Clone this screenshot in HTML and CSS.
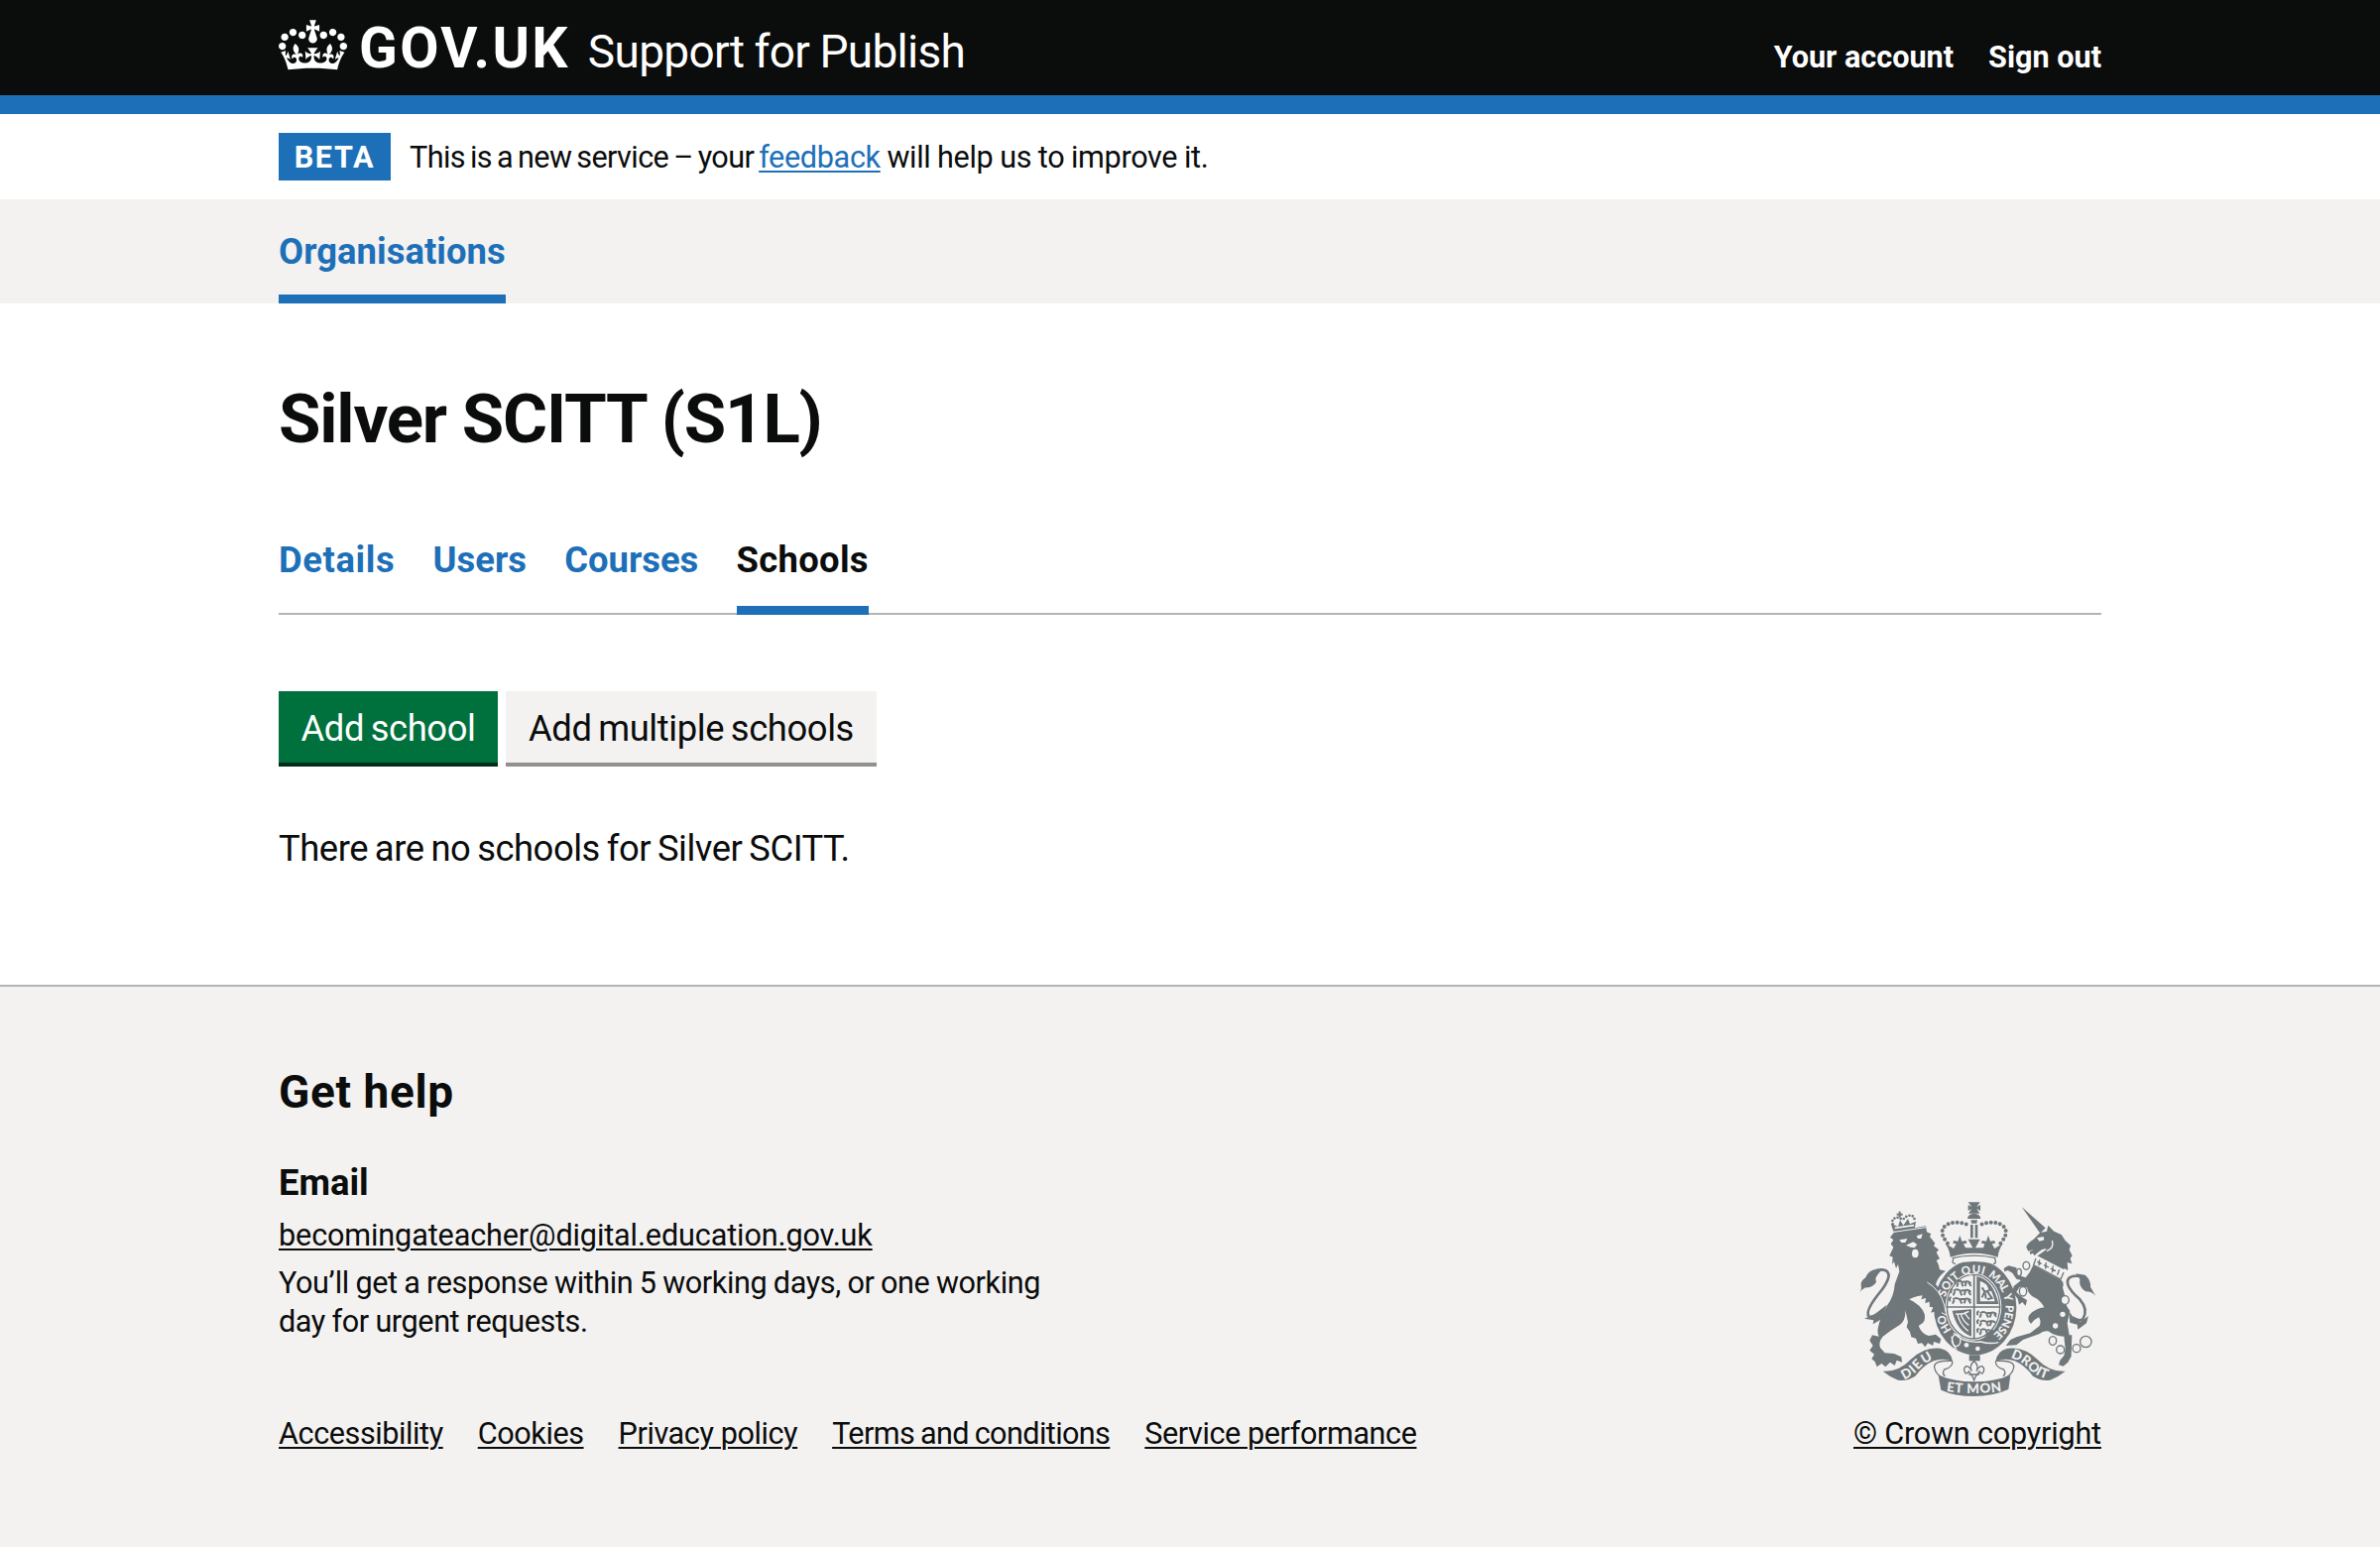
FILE: index.html
```html
<!DOCTYPE html>
<html lang="en">
<head>
<meta charset="utf-8">
<title>Silver SCITT (S1L) - Support for Publish - GOV.UK</title>
<link rel="stylesheet" href="styles.css">
</head>
<body>
<header class="header">
  <div class="container header-row">
    <svg class="header-crown" viewBox="0 0 132 97" aria-hidden="true"><path fill="currentColor" fill-rule="evenodd" d="M25 30.2c3.5 1.5 7.7-.2 9.1-3.7 1.5-3.6-.2-7.8-3.9-9.2-3.6-1.4-7.6.3-9.1 3.9-1.4 3.5.3 7.5 3.9 9zM9 39.5c3.6 1.5 7.8-.2 9.2-3.7 1.5-3.6-.2-7.8-3.9-9.1-3.6-1.5-7.6.2-9.1 3.8-1.4 3.5.3 7.5 3.8 9zM4.4 57.2c3.5 1.5 7.7-.2 9.1-3.8 1.5-3.6-.2-7.7-3.9-9.1-3.5-1.5-7.6.3-9.1 3.8-1.4 3.5.3 7.6 3.9 9.1zm38.3-21.4c3.5 1.5 7.7-.2 9.1-3.8 1.5-3.6-.2-7.7-3.9-9.1-3.6-1.5-7.6.3-9.1 3.8-1.3 3.6.4 7.7 3.9 9.1zm64.4-5.6c-3.6 1.5-7.8-.2-9.1-3.7-1.5-3.6.2-7.8 3.8-9.2 3.6-1.4 7.7.3 9.2 3.9 1.3 3.5-.4 7.5-3.9 9zm15.9 9.3c-3.6 1.5-7.7-.2-9.1-3.7-1.5-3.6.2-7.8 3.7-9.1 3.6-1.5 7.7.2 9.2 3.8 1.5 3.5-.3 7.5-3.8 9zm4.7 17.7c-3.6 1.5-7.8-.2-9.2-3.8-1.5-3.6.2-7.7 3.9-9.1 3.6-1.5 7.7.3 9.2 3.8 1.3 3.5-.4 7.6-3.9 9.1zM89.3 35.8c-3.6 1.5-7.8-.2-9.2-3.8-1.4-3.6.2-7.7 3.9-9.1 3.6-1.5 7.7.3 9.2 3.8 1.4 3.6-.3 7.7-3.9 9.1zM69.7 17.7l8.9 4.7V9.3l-8.9 2.8c-.2-.3-.5-.6-.9-.9L72.4 0H59.6l3.5 11.2c-.3.3-.6.5-.9.9l-8.8-2.8v13.1l8.8-4.7c.3.3.6.7.9.9l-5 15.4v.1c-.2.8-.4 1.6-.4 2.4 0 4.1 3.1 7.5 7 8.1h.2c.3 0 .7.1 1 .1.4 0 .7 0 1-.1h.2c4-.6 7.1-4.1 7.1-8.1 0-.8-.1-1.7-.4-2.4V34l-5.1-15.4c.4-.2.7-.6 1-.9zM66 92.8c16.9 0 32.8 1.1 47.1 3.2 4-16.9 8.9-26.7 14-33.5l-9.6-3.4c1 4.9 1.1 7.2 0 10.2-1.5-1.4-3-4.3-4.2-8.7L108.6 76c2.8-2 5-3.2 7.5-3.3-4.4 9.4-10 11.9-13.6 11.2-4.3-.8-6.3-4.6-5.6-7.9 1-4.7 5.7-5.9 8-.5 4.3-8.7-3-11.4-7.6-8.8 7.1-7.2 7.9-13.5 2.1-21.1-8 6.1-8.1 12.3-4.5 20.8-4.7-5.4-12.1-2.5-9.5 6.2 3.4-5.2 7.9-2 7.2 3.1-.6 4.3-6.4 7.8-13.5 7.2-10.3-.9-10.9-8-11.2-13.8 2.5-.5 7.1 1.8 11 7.3L80.2 60c-4.1 4.4-8 5.3-12.3 5.4 1.4-4.4 8-11.6 8-11.6H55.5s6.4 7.2 7.9 11.6c-4.2-.1-8-1-12.3-5.4l1.4 16.4c3.9-5.5 8.5-7.7 10.9-7.3-.3 5.8-.9 12.8-11.1 13.8-7.2.6-12.9-2.9-13.5-7.2-.7-5 3.8-8.3 7.1-3.1 2.7-8.7-4.6-11.6-9.4-6.2 3.7-8.5 3.6-14.7-4.6-20.8-5.8 7.6-5 13.9 2.2 21.1-4.7-2.6-11.9.1-7.7 8.8 2.3-5.5 7.1-4.2 8.1.5.7 3.3-1.3 7.1-5.7 7.9-3.5.7-9-1.8-13.5-11.2 2.5.1 4.7 1.3 7.5 3.3l-4.7-15.4c-1.2 4.4-2.7 7.2-4.3 8.7-1.1-3-.9-5.3 0-10.2l-9.5 3.4c5 6.9 9.9 16.7 14 33.5 14.8-2.1 30.8-3.2 47.7-3.2z"/></svg>
    <span class="header-logotype">GOV.UK</span>
    <span class="header-service">Support for Publish</span>
    <nav class="header-nav">
      <a class="header-link">Your account</a>
      <a class="header-link">Sign out</a>
    </nav>
  </div>
</header>
<div class="header-bar"></div>

<div class="container phase-banner">
  <strong class="phase-tag">BETA</strong>
  <span class="phase-text"><span class="phase-lead">This is a new service – your </span><a class="phase-link">feedback</a> will help us to improve it.</span>
</div>

<nav class="primary-nav">
  <div class="container"><a class="primary-link">Organisations</a></div>
</nav>

<main class="container main">
  <h1 class="title">Silver SCITT (S1L)</h1>
  <nav class="tabs">
    <a class="tab tab-details">Details</a>
    <a class="tab">Users</a>
    <a class="tab">Courses</a>
    <a class="tab tab-current">Schools</a>
  </nav>
  <div class="buttons">
    <button class="button button-primary">Add school</button>
    <button class="button button-secondary">Add multiple schools</button>
  </div>
  <p class="body-text">There are no schools for Silver SCITT.</p>
</main>

<footer class="footer">
  <div class="container footer-row">
    <div class="footer-main">
      <h2 class="footer-title">Get help</h2>
      <h3 class="footer-subtitle">Email</h3>
      <p class="footer-text"><a class="footer-link footer-email">becomingateacher@digital.education.gov.uk</a></p>
      <p class="footer-text">You’ll get a response within 5 working days, or one working<br>day for urgent requests.</p>
      <div class="footer-links">
        <a class="footer-link">Accessibility</a>
        <a class="footer-link">Cookies</a>
        <a class="footer-link">Privacy policy</a>
        <a class="footer-link link-terms">Terms and conditions</a>
        <a class="footer-link">Service performance</a>
      </div>
    </div>
    <div class="footer-meta">
      <svg class="crest" viewBox="27 33 750 588" aria-hidden="true">
        <defs>
          <path id="garter" pathLength="360" d="M394 455A93 103 0 0 1 301 352A93 103 0 0 1 394 249A93 103 0 0 1 487 352A93 103 0 0 1 394 455"/>
          <path id="ribbon-left" d="M180 571Q206 560 226 538Q246 516 280 504"/>
          <path id="ribbon-mid" d="M308 606Q392 618 480 605"/>
          <path id="ribbon-right" d="M502 504Q538 516 560 540Q582 562 618 570"/>
        </defs>
        <!-- lion -->
        <g class="ink">
          <path d="M138 140L152 122L246 106L249 124L262 130L258 138L274 158L270 166L285 178L278 186L288 205L278 210Q286 222 288 238L306 242Q284 256 276 282L290 300Q300 320 300 345L303 370L290 364L284 378L277 364L262 368L268 352L256 350L268 338L260 334L244 340L246 324L232 328L236 316L222 318Q205 322 196 328Q232 345 242 372Q246 392 236 400L224 408Q234 434 256 438L276 434L292 448L288 462L270 456L268 468L252 460L244 472L234 460L222 462L216 446L202 442L198 426L188 412L192 396L184 360Q186 392 166 406Q140 422 116 440Q102 456 108 474L122 490L150 492L172 502L174 518L158 512L152 528L138 518L124 532L112 522L98 532L92 516L82 508L90 494L76 482L86 468L76 452L84 436L104 440Q98 428 102 412Q106 388 128 348Q150 318 152 282L166 244L162 222L156 234L150 214L144 222L146 200L136 196L148 170L140 160L148 148Z"/>
          <path d="M42 312Q54 298 50 286Q48 272 64 262Q72 238 100 236L112 240Q88 262 96 276Q84 294 64 292Q50 298 42 312Z"/>
          <path d="M60 374Q76 384 100 366L128 344L112 388L86 403L88 391L60 386L72 381Z"/>
          <path d="M148 122L140 98L162 108L168 88L178 104L192 84L198 100L216 92L212 116Z"/>
          <rect x="164" y="62" width="6" height="18"/><rect x="158" y="68" width="18" height="6"/>
        </g>
        <path class="line w8" d="M96 240Q132 232 134 256Q132 278 98 318Q62 366 74 378"/>
        <path class="dots w8" d="M146 100Q140 80 166 80Q176 92 188 76Q214 68 212 94"/>
        <g class="paper">
          <path d="M166 148L190 144L184 156L172 156ZM218 136L236 130L232 144L222 144Z"/>
          <path d="M186 164L208 154L220 162L212 172L200 170Z"/>
          <ellipse cx="214" cy="189" rx="10" ry="13"/>
        </g>
        <path class="gap w3" d="M150 124L246 110"/>
        <path class="gap w5" d="M152 112L210 104"/>

        <!-- garter and shield -->
        <ellipse class="ink" cx="395" cy="352" rx="125" ry="144"/>
        <ellipse class="paper" cx="390" cy="350" rx="85" ry="102"/>
        <ellipse class="line w4" cx="390" cy="350" rx="80" ry="97"/>
        <path class="ink" d="M400 258Q450 268 466 342H400Z"/>
        <path class="paper" d="M410 272Q444 284 455 334H410Z"/>
        <path class="ink" d="M326 362L384 358V440Q340 424 326 362Z"/>
        <path class="gap w4" d="M342 372Q346 400 374 424M352 370Q356 392 376 406M362 368L378 388M336 372Q360 374 376 364"/>
        <path class="line w5" d="M392 252V448M308 351H472"/>
        <g class="line w7">
          <path d="M336 282q-6-10 3-12M340 276q8-8 16 0l12-2q10-2 14 6M344 278l-4 12M354 278l5 11M368 276l-3 12M376 278l7 10M338 272l6-4"/>
          <path d="M324 308q-6-10 3-12M330 302q10-8 20 0l16-2q12-2 16 6M334 304l-5 12M350 304l5 12M366 302l-4 13M375 304l7 11"/>
          <path d="M320 334q-6-10 3-12M328 328q10-8 20 0l18-2q12-2 16 6M332 330l-5 11M350 330l5 11M366 328l-4 12M375 330l7 10"/>
          <path d="M404 376q-6-10 3-12M410 370q10-8 20 0l14-2q12-2 16 6M414 372l-5 11M430 372l5 11M444 370l-4 12M453 372l6 9"/>
          <path d="M404 402q-6-10 3-12M410 396q10-8 20 0l12-2q12-2 14 6M414 398l-5 11M430 398l5 11M444 396l-4 12"/>
          <path d="M404 428q-6-10 3-12M410 422q10-8 20 0l10-2M414 424l-5 11M428 424l5 9"/>
        </g>
        <path class="line w7" d="M416 322L424 304L416 292M424 306L440 300L434 284M432 304L446 324L432 328M426 310L428 326"/>
        <path class="gap w4" d="M330 430Q362 462 414 456M324 440Q330 476 340 478"/>
        <path class="ink" d="M412 456L446 418L474 440L448 474Z"/>
        <path class="gap w4" d="M412 456Q440 464 466 458"/>
        <g class="paper"><circle cx="369" cy="466" r="7"/><circle cx="403" cy="477" r="7"/></g>
        <ellipse class="gap w4" cx="338" cy="452" rx="13" ry="18"/>
        <g class="motto">
          <text><textPath href="#garter" startOffset="47" textLength="52">HO</textPath></text>
          <text><textPath href="#garter" startOffset="108" textLength="76">SOIT</textPath></text>
          <text><textPath href="#garter" startOffset="158" textLength="66">QUI</textPath></text>
          <text><textPath href="#garter" startOffset="204" textLength="68">MAL</textPath></text>
          <text><textPath href="#garter" startOffset="247">Y</textPath></text>
          <text><textPath href="#garter" startOffset="266" textLength="100">PENSE</textPath></text>
        </g>
        <path class="ink" d="M250 276Q290 300 302 345L308 372L292 366L284 380L276 364L262 366L270 350L258 348Z"/>
        <path class="gap w3" d="M250 276Q290 300 302 345L308 376L294 368"/>

        <!-- crown -->
        <path class="paper" d="M322 196Q392 184 464 196L456 222Q392 204 330 222Z"/>
        <g class="ink">
          <path d="M374 34H410L400 48L411 42V60L400 54L409 68H375L384 54L374 60V42L385 48Z"/>
          <path d="M372 84A20 16 0 0 1 412 84Z"/>
          <path d="M304 158L330 174L338 160L328 158L330 150L343 152L349 134L355 152L368 150L370 158L360 160L366 172H388L374 146H410L396 172H420L424 160L414 158L416 150L429 152L435 134L441 152L454 150L456 158L446 160L454 174L480 158Q466 176 464 200Q392 176 320 200Q318 176 304 158Z"/>
          <path d="M382 88H402L400 98H384ZM381 102H389V142H381ZM395 102H403V142H395Z"/>
        </g>
        <path class="line w4" d="M330 204Q322 220 336 220M454 204Q462 220 450 220M326 203Q392 188 458 203"/>
        <path class="dots w11" d="M312 158Q284 126 304 106Q330 86 372 102M472 158Q500 126 480 106Q454 86 412 102"/>

        <!-- unicorn -->
        <g class="ink">
          <path d="M536 48L608 112L592 128Z"/>
          <path d="M616 104L634 122L656 132L668 150L684 165L680 178L689 196L683 204L688 220L674 216L676 240L664 234L662 246L578 200L612 176Q602 172 588 184L574 196L570 188L562 192L560 184L574 176L556 182L550 170Q552 158 572 146L592 126L612 122Z"/>
          <path d="M572 222L654 268Q666 278 660 292L668 322Q666 344 682 362L674 400L680 436L688 436L686 500L676 518L662 530L648 526L652 512L664 498L668 478L664 440Q638 440 616 424Q600 422 590 432L540 450L520 466L488 468L502 450L520 442L562 430L590 408Q596 395 588 382Q574 388 564 402Q550 388 560 374Q580 354 604 352Q594 332 574 322Q556 314 552 292L530 290L520 306L538 322L552 330L548 348L538 336L528 344L524 326L508 306L512 288L534 270L520 266L508 248L494 240L484 244L482 234L496 226L520 232L524 254L548 262L560 246Z"/>
          <path d="M700 250L728 254Q746 270 744 290L760 318Q750 304 730 304Q708 292 712 266Z"/>
          <path d="M678 362L696 388L714 396L738 378L732 400L706 419L704 404L682 398Z"/>
        </g>
        <path class="line w8" d="M716 258Q668 252 676 284Q682 302 712 328Q738 358 722 386Q712 398 690 382"/>
        <path class="paper" d="M580 194L668 240L656 270L570 224Z"/>
        <path class="line w4" d="M579 204L572 224L654 267L663 246M588 226L590 208M583 214L596 220M608 236L610 216M603 224L618 231M628 247L631 226M623 234L639 242M644 254L650 238"/>
        <path class="gap w4" d="M628 150Q636 172 612 182"/>
        <path class="paper" d="M582 142L602 138L604 148L590 152Z"/>
        <g class="ring">
          <ellipse cx="550" cy="226" rx="10" ry="12"/><ellipse cx="528" cy="246" rx="7" ry="11"/><ellipse cx="540" cy="304" rx="11" ry="14"/>
          <ellipse cx="667" cy="330" rx="12" ry="13"/><ellipse cx="630" cy="453" rx="11" ry="13"/>
          <circle cx="653" cy="480" r="12"/><circle cx="702" cy="476" r="12"/><circle cx="730" cy="456" r="17"/>
        </g>
        <g class="paper"><circle cx="660" cy="373" r="8"/><circle cx="638" cy="408" r="8"/></g>

        <!-- ribbon -->
        <g class="ink">
          <path d="M116 545Q164 548 200 510Q240 470 290 476Q324 484 327 516Q300 504 270 514Q240 526 214 560Q190 576 162 572Q136 562 116 545Z"/>
          <path d="M668 545Q620 548 584 510Q544 470 494 476Q460 484 457 516Q484 504 514 514Q544 526 570 560Q594 576 622 572Q648 562 668 545Z"/>
          <path d="M284 558Q340 578 392 577Q446 578 502 558L496 600Q450 621 392 621Q332 621 292 602Z"/>
          <path d="M377 496H410V514H377Z"/>
        </g>
        <path class="line w4" d="M327 514Q268 512 272 534Q276 556 300 566M327 516Q326 534 302 540Q294 552 304 560M457 514Q516 512 512 534Q508 556 484 566M457 516Q458 534 482 540Q490 552 480 560"/>
        <path class="fleur" d="M392 514Q376 530 385 545Q378 530 368 530Q356 538 367 552Q374 552 376 546L382 554Q388 560 392 572Q396 560 402 554L408 546Q410 552 417 552Q428 538 416 530Q406 530 399 545Q408 530 392 514ZM376 555H408"/>
        <g class="motto motto-ribbon">
          <text><textPath href="#ribbon-left" textLength="108">DIEU</textPath></text>
          <text><textPath href="#ribbon-mid" textLength="168">ET MON</textPath></text>
          <text><textPath href="#ribbon-right" textLength="128">DROIT</textPath></text>
        </g>
      </svg>
      <a class="footer-link link-copyright">© Crown copyright</a>
    </div>
  </div>
</footer>
</body>
</html>
```
FILE: styles.css
```css
* { box-sizing: border-box; }
body {
  margin: 0;
  min-height: 1560px;
  display: flex;
  flex-direction: column;
  background: #fff;
  color: #0b0c0c;
  font-family: Roboto, "Liberation Sans", sans-serif;
  font-size: 36.4px;
}
h1, h2, h3, p { margin: 0; }
.container { width: 1838px; margin: 0 auto; }

.header { height: 96px; background: #0b0c0c; color: #fff; }
.header-row { display: flex; align-items: baseline; padding-top: 20px; white-space: nowrap; }
.header-crown { align-self: flex-start; width: 69px; height: 51px; flex: none; }
.header-logotype { margin-left: 12px; font-size: 57px; line-height: 57px; font-weight: 700; letter-spacing: 2.3px; }
.header-service { margin-left: 18px; font-size: 46px; line-height: 46px; letter-spacing: -.7px; word-spacing: -.5px; }
.header-nav { display: flex; gap: 35px; margin-left: auto; }
.header-link { font-size: 30.6px; line-height: 38px; font-weight: 700; }
.header-bar { height: 19px; background: #1d70b8; }

.phase-banner { height: 86px; display: flex; align-items: center; }
.phase-tag {
  width: 113px;
  height: 48px;
  background: #1d70b8;
  color: #fff;
  font-size: 30.6px;
  line-height: 49px;
  letter-spacing: 1.7px;
  text-align: center;
}
.phase-text { margin-left: 19px; padding-top: 2px; font-size: 30.6px; line-height: 38px; letter-spacing: -.35px; word-spacing: -.5px; }
.phase-lead { letter-spacing: -.6px; word-spacing: -2px; }
.phase-link { color: #1d70b8; text-decoration: underline 2px; text-underline-offset: 3px; }

.primary-nav { height: 105px; background: #f3f2f1; }
.primary-link {
  display: inline-block;
  height: 105px;
  border-bottom: 9px solid #1d70b8;
  color: #1d70b8;
  font-weight: 700;
  line-height: 105px;
  letter-spacing: .05px;
}

.main { flex: none; height: 687px; padding-top: 79px; }
.title { font-size: 69px; line-height: 76px; letter-spacing: -1.2px; word-spacing: 0; }
.tabs { display: flex; gap: 38.3px; height: 80px; margin-top: 79px; border-bottom: 2px solid #b1b4b6; }
.tab { height: 80px; color: #1d70b8; font-weight: 700; line-height: 49px; }
.tab-details { letter-spacing: .6px; }
.tab-current { color: #0b0c0c; border-bottom: 9px solid #1d70b8; letter-spacing: .3px; }
.buttons { display: flex; gap: 8px; margin-top: 77px; }
.button {
  height: 76px;
  padding: 3px 0 0;
  border: 0;
  border-bottom: 4px solid;
  font: inherit;
  letter-spacing: -.4px;
  word-spacing: -2px;
}
.button-primary { width: 221px; background: #00703c; border-color: #002d18; color: #fff; }
.button-secondary { width: 374px; background: #f3f2f1; border-color: #929191; color: #0b0c0c; }
.body-text { margin-top: 59px; line-height: 48px; letter-spacing: -.47px; word-spacing: -1.7px; }

.footer { flex: 1; background: #f3f2f1; border-top: 2px solid #b1b4b6; }
.footer-row { display: flex; justify-content: space-between; align-items: flex-end; padding-top: 78px; }
.footer-title { font-size: 46px; line-height: 57px; letter-spacing: .6px; }
.footer-subtitle { margin-top: 39px; font-size: 36.4px; line-height: 48px; }
.footer-text { margin-top: 10px; font-size: 30.6px; line-height: 38.3px; letter-spacing: -.4px; word-spacing: -.6px; white-space: nowrap; }
.footer-email { letter-spacing: -.13px; }
.footer-links { display: flex; gap: 35px; margin-top: 75px; letter-spacing: -.42px; }
.footer-link { font-size: 30.6px; line-height: 38.3px; text-decoration: underline 2px; text-underline-offset: 3px; white-space: nowrap; }
.link-terms { letter-spacing: -.6px; word-spacing: -1.2px; }
.footer-meta { width: 250px; display: flex; flex-direction: column; }
.link-copyright { margin-top: 19px; letter-spacing: -.2px; }

.crest { width: 250px; height: 196px; }
.ink { fill: #6f777b; }
.paper { fill: #f3f2f1; }
.line { fill: none; stroke: #6f777b; }
.gap { fill: none; stroke: #f3f2f1; }
.dots { fill: none; stroke: #6f777b; stroke-linecap: round; stroke-dasharray: 0 14; }
.dots.w8 { stroke-dasharray: 0 10; }
.ring { fill: #f3f2f1; stroke: #6f777b; stroke-width: 4; }
.fleur { fill: #f3f2f1; stroke: #6f777b; stroke-width: 4; }
.w3 { stroke-width: 3; }
.w4 { stroke-width: 4; }
.w5 { stroke-width: 5; }
.w7 { stroke-width: 6; }
.w8 { stroke-width: 8; }
.w11 { stroke-width: 12; }
.motto { fill: #f3f2f1; font: 900 34px Lato, sans-serif; letter-spacing: 0; }
.motto-ribbon { font-size: 40px; }
```
